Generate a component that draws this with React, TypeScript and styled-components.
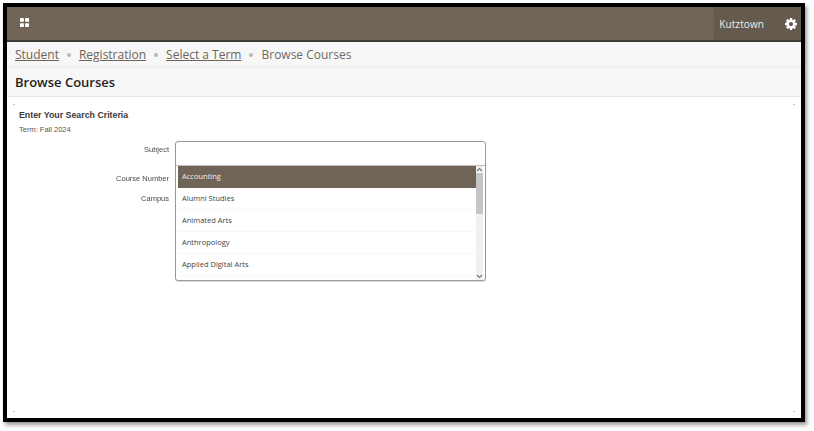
import React from 'react';
import styled, { createGlobalStyle } from 'styled-components';

const GlobalStyle = createGlobalStyle`
  html, body {
    margin: 0;
    padding: 0;
    background: #fff;
  }
`;

const subjects = ['Accounting', 'Alumni Studies', 'Animated Arts', 'Anthropology', 'Applied Digital Arts'];

const App = (): JSX.Element => {
  return (
    <>
      <GlobalStyle />
      <Page>
        <Frame>
          <Header>
            <GridIcon width="9" height="9" viewBox="0 0 10 10">
              <rect x="0" y="0" width="4.3" height="4.3" rx="0.5" />
              <rect x="5.7" y="0" width="4.3" height="4.3" rx="0.5" />
              <rect x="0" y="5.7" width="4.3" height="4.3" rx="0.5" />
              <rect x="5.7" y="5.7" width="4.3" height="4.3" rx="0.5" />
            </GridIcon>
            <HeaderRight>
              <Institution>Kutztown</Institution>
              <GearButton>
                <svg width="14" height="14" viewBox="0 0 1792 1792">
                  <path
                    fill="#fff"
                    fillRule="evenodd"
                    d="M1152 896q0-106-75-181t-181-75-181 75-75 181 75 181 181 75 181-75 75-181zm512-109v222q0 12-8 23t-20 13l-185 28q-19 54-39 91 35 50 107 138 10 12 10 25t-9 23q-27 37-99 108t-94 71q-12 0-26-9l-138-108q-44 23-91 38-16 136-29 186-7 28-36 28h-222q-14 0-24.5-8.5t-11.5-21.5l-28-184q-49-16-90-37l-141 107q-10 9-25 9-14 0-25-11-126-114-165-168-7-10-7-23 0-12 8-23 15-21 51-66.5t54-70.5q-27-50-41-99l-183-27q-13-2-21-12.5t-8-23.5v-222q0-12 8-23t19-13l186-28q14-46 39-92-40-57-107-138-10-12-10-24 0-10 9-23 26-36 98.5-107.5t94.5-71.5q13 0 26 10l138 107q44-23 91-38 16-136 29-186 7-28 36-28h222q14 0 24.5 8.5t11.5 21.5l28 184q49 16 90 37l142-107q9-9 24-9 13 0 25 10 129 119 165 170 7 8 7 22 0 12-8 23-15 21-51 66.5t-54 70.5q26 50 41 98l183 28q13 2 21 12.5t8 23.5z"
                  />
                </svg>
              </GearButton>
            </HeaderRight>
          </Header>
          <Breadcrumbs>
            <Crumb>Student</Crumb>
            <Dot />
            <Crumb>Registration</Crumb>
            <Dot />
            <Crumb>Select a Term</Crumb>
            <Dot />
            <CurrentCrumb>Browse Courses</CurrentCrumb>
          </Breadcrumbs>
          <TitleBar>
            <Title>Browse Courses</Title>
          </TitleBar>
          <Content>
            <Corner $side="left" $edge="top" />
            <Corner $side="right" $edge="top" />
            <Corner $side="left" $edge="bottom" />
            <Corner $side="right" $edge="bottom" />
            <SearchHeading>Enter Your Search Criteria</SearchHeading>
            <TermLine>Term: Fall 2024</TermLine>
            <Form>
              <Labels>
                <SubjectLabel>Subject</SubjectLabel>
                <NumberLabel>Course Number</NumberLabel>
                <CampusLabel>Campus</CampusLabel>
              </Labels>
              <Combo>
                <ComboInput />
                <Results>
                  <Options>
                    {subjects.map((subject, index) => (
                      <Option key={subject} $selected={index === 0}>
                        {subject}
                      </Option>
                    ))}
                  </Options>
                  <Scrollbar>
                    <Arrow viewBox="0 0 7 5">
                      <path d="M1 4l2.5-2.5L6 4" />
                    </Arrow>
                    <Track>
                      <Thumb />
                    </Track>
                    <Arrow viewBox="0 0 7 5">
                      <path d="M1 1l2.5 2.5L6 1" />
                    </Arrow>
                  </Scrollbar>
                </Results>
              </Combo>
            </Form>
          </Content>
        </Frame>
      </Page>
    </>
  );
};

const Page = styled.div`
  width: 814px;
  height: 431px;
  box-sizing: border-box;
  padding: 3px 0 0 3px;
  overflow: hidden;
`;

const Frame = styled.div`
  display: flex;
  flex-direction: column;
  box-sizing: border-box;
  width: 802px;
  height: 419px;
  border: 4px solid #000;
  background: #fff;
  box-shadow: 2px 3px 4px rgba(0, 0, 0, 0.4);
`;

const Header = styled.header`
  display: flex;
  align-items: center;
  justify-content: space-between;
  flex-shrink: 0;
  box-sizing: border-box;
  height: 35px;
  padding-left: 13px;
  background: #6f6457;
  border-bottom: 2px solid #3f3a33;
`;

const GridIcon = styled.svg`
  fill: #fff;
  margin-top: -2px;
`;

const HeaderRight = styled.div`
  display: flex;
  align-items: center;
  height: 100%;
  background: #655a4e;
`;

const Institution = styled.span`
  padding: 0 20px 0 5px;
  font-family: 'Open Sans', sans-serif;
  font-size: 10px;
  letter-spacing: 0.1px;
  color: #efece8;
`;

const GearButton = styled.span`
  display: flex;
  padding-right: 3px;
`;

const Breadcrumbs = styled.nav`
  display: flex;
  align-items: center;
  flex-shrink: 0;
  box-sizing: border-box;
  height: 26px;
  padding: 0 0 0 8px;
  background: #f7f7f7;
  border-bottom: 2px solid #f0f0f0;
  font-family: 'Open Sans', sans-serif;
  font-size: 12px;
  color: #6f6457;
`;

const Crumb = styled.span`
  text-decoration: underline;
`;

const CurrentCrumb = styled.span`
  color: #6f6a64;
`;

const Dot = styled.span`
  width: 4px;
  height: 4px;
  margin: 2px 8px 0;
  border-radius: 50%;
  background: #b8b8b8;
`;

const TitleBar = styled.div`
  display: flex;
  align-items: center;
  flex-shrink: 0;
  box-sizing: border-box;
  height: 29px;
  padding-left: 8px;
  background: #f7f7f7;
  border-bottom: 1px solid #e9e9e9;
`;

const Title = styled.h1`
  margin: 0;
  font-family: 'Open Sans', sans-serif;
  font-size: 13px;
  font-weight: 600;
  color: #222;
`;

const Content = styled.main`
  position: relative;
  flex: 1;
  padding: 12px 0 0 12px;
`;

const Corner = styled.i<{ $side: 'left' | 'right'; $edge: 'top' | 'bottom' }>`
  position: absolute;
  ${(props) => props.$side}: 6px;
  ${(props) => props.$edge}: ${(props) => (props.$edge === 'top' ? '7px' : '6px')};
  width: 2px;
  height: 1px;
  background: #c4c8d0;
`;

const SearchHeading = styled.h2`
  margin: 0;
  font-family: 'Liberation Sans', sans-serif;
  font-size: 8.8px;
  line-height: 12px;
  font-weight: 700;
  color: #3a3a3a;
`;

const TermLine = styled.p`
  margin: 4px 0 0;
  font-family: 'Liberation Sans', sans-serif;
  font-size: 7.5px;
  line-height: 10px;
  color: #555;
`;

const Form = styled.div`
  display: flex;
  margin-top: 6px;
`;

const Labels = styled.div`
  display: flex;
  flex-direction: column;
  align-items: flex-end;
  width: 150px;
  filter: grayscale(1);
  font-family: 'Liberation Sans', sans-serif;
  font-size: 7.5px;
  line-height: 10px;
  color: #4a4a4a;
`;

const SubjectLabel = styled.label`
  margin-top: 4px;
`;

const NumberLabel = styled.label`
  margin-top: 19px;
`;

const CampusLabel = styled.label`
  margin-top: 10px;
`;

const Combo = styled.div`
  box-sizing: border-box;
  width: 311px;
  height: 140px;
  margin-left: 6px;
  background: #fff;
  border: 1px solid #9a9894;
  border-radius: 3px;
  box-shadow: 0 1px 1px rgba(0, 0, 0, 0.15);
`;

const ComboInput = styled.div`
  height: 23px;
  border-bottom: 1px solid #bdbdbd;
`;

const Results = styled.div`
  display: flex;
  padding: 0 2px 0 2px;
`;

const Options = styled.ul`
  flex: 1;
  margin: 0;
  padding: 0;
  list-style: none;
`;

const Option = styled.li<{ $selected: boolean }>`
  display: flex;
  align-items: center;
  box-sizing: border-box;
  height: 22px;
  padding: 0 0 2px 4px;
  font-family: 'Open Sans', sans-serif;
  font-size: 7.5px;
  color: ${(props) => (props.$selected ? '#efece8' : '#444')};
  background: ${(props) => (props.$selected ? '#6f6457' : '#fff')};
  border-bottom: 1px solid ${(props) => (props.$selected ? '#6f6457' : '#f7f7f7')};
`;

const Scrollbar = styled.div`
  display: flex;
  flex-direction: column;
  align-items: center;
  width: 7px;
  height: 114px;
  background: #f1f1f1;
`;

const Arrow = styled.svg`
  flex-shrink: 0;
  width: 7px;
  height: 7px;
  fill: none;
  stroke: #777;
  stroke-width: 1.1;
`;

const Track = styled.div`
  flex: 1;
  width: 100%;
`;

const Thumb = styled.div`
  height: 41px;
  background: #c6c6c6;
`;

export default App;
